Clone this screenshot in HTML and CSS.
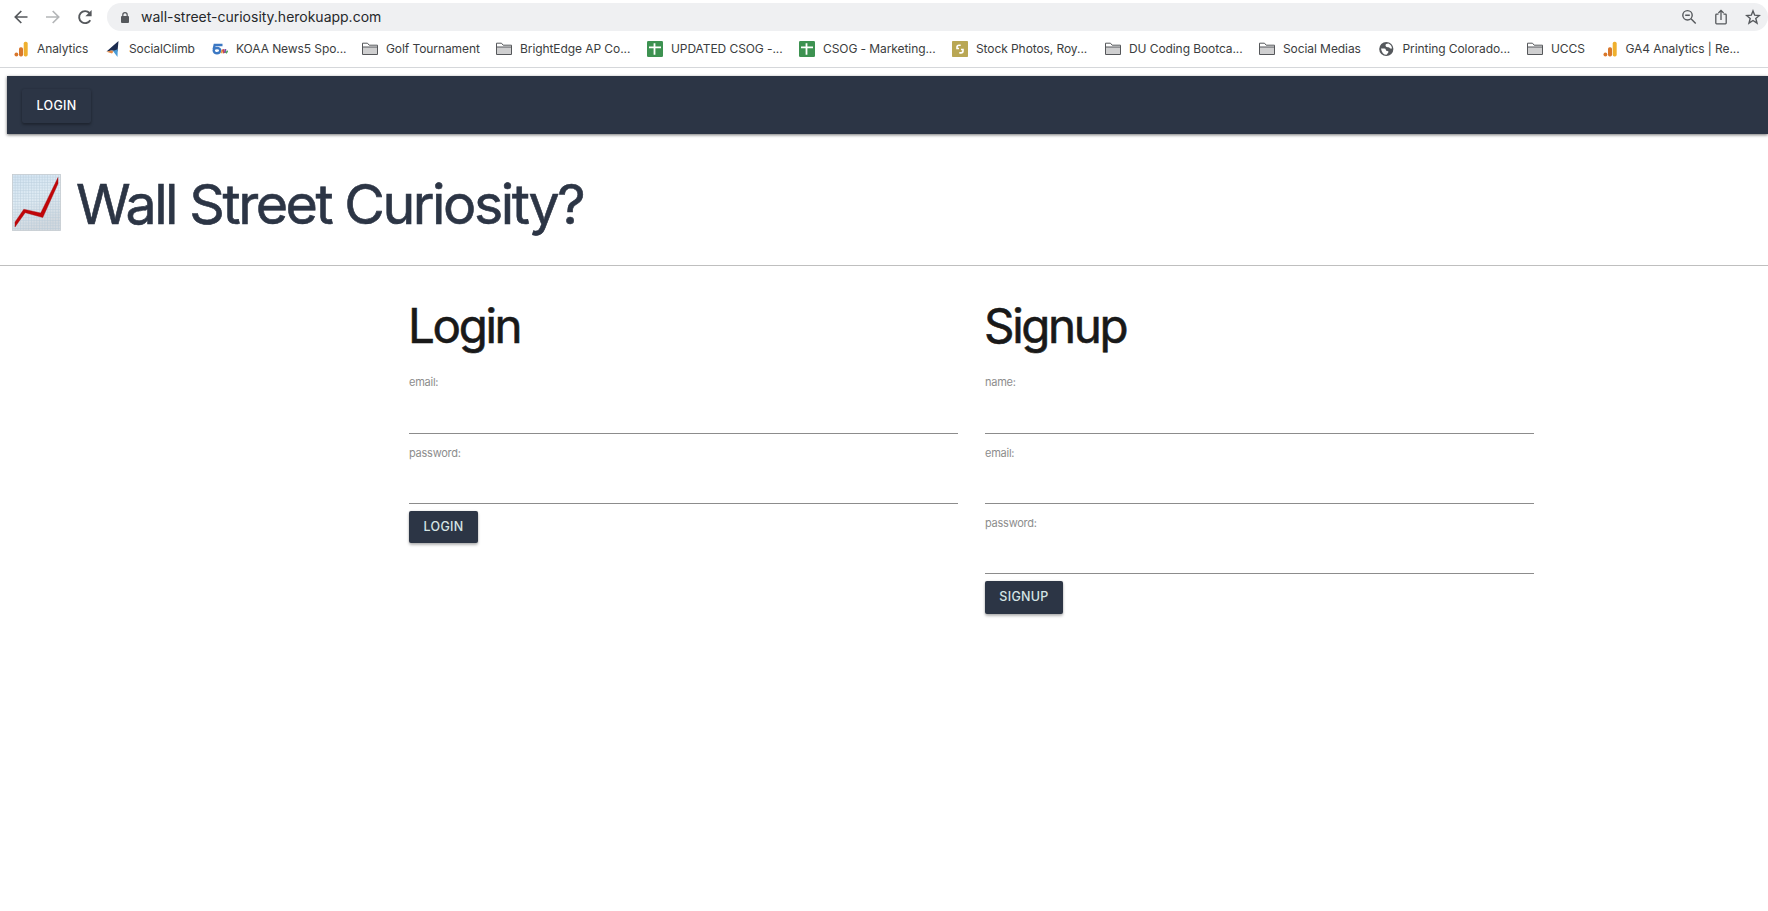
FILE: index.html
```html
<!DOCTYPE html>
<html lang="en">
<head>
<meta charset="utf-8">
<title>Wall Street Curiosity?</title>
<link rel="stylesheet" href="styles.css">
</head>
<body>
<svg class="defs" width="0" height="0">
  <symbol id="folder" viewBox="0 0 16 16"><path d="M.5 13.5v-11h5l1.700 2h8.300v9z" fill="#fff"/><path d="M1 6h14v7.500H1z" fill="#cfcfd0"/><path d="M.5 13.500v-11.300h5l1.700 2h8.300v9.300zM.5 6h15" fill="none" stroke="#55575a"/></symbol>
  <symbol id="bars" viewBox="0 0 16 16"><circle cx="3.400" cy="13.500" r="1.900" fill="#d9772b"/><rect x="6" y="6.200" width="4" height="9.200" rx="1.700" fill="#d9772b"/><rect x="10.700" y=".8" width="4" height="14.600" rx="1.700" fill="#efb02e"/></symbol>
  <symbol id="sheet" viewBox="0 0 16 16"><rect width="16" height="16" rx="1.300" fill="#3d9251"/><path d="M2 6.300h12M7.500 2.300v11.500" stroke="#fff" stroke-width="1.800"/></symbol>
</svg>
<header class="browser">
  <div class="toolbar">
    <svg class="tool" viewBox="0 0 16 16"><path d="M14.500 8H2.500M8.300 2 2.300 8l6 6" fill="none" stroke="#55585c" stroke-width="1.700"/></svg>
    <svg class="tool" viewBox="0 0 16 16"><path d="M1 8h12.500M7.700 2l6 6-6 6" fill="none" stroke="#b4b6b8" stroke-width="1.700"/></svg>
    <svg class="tool" viewBox="0 0 16 16"><path d="M13.300 11.200A6 6 0 1 1 12.500 4" fill="none" stroke="#55585c" stroke-width="1.900"/><path d="M14.600 1v6.200H8.400z" fill="#55585c"/></svg>
    <div class="address">
      <svg class="lock" viewBox="0 0 8 11"><rect y="4" width="8" height="7" rx="1" fill="#55585c"/><path d="M1.800 4.500V2.900a2.200 2.200 0 0 1 4.400 0v1.600" fill="none" stroke="#55585c" stroke-width="1.200"/></svg>
      <span class="url">wall-street-curiosity.herokuapp.com</span>
      <div class="actions">
        <svg class="action" viewBox="0 0 16 16"><g fill="none" stroke="#55585c" stroke-width="1.400"><circle cx="6.500" cy="6.300" r="4.700"/><path d="M4.200 6.300h4.600M10 9.800l4.700 4.700"/></g></svg>
        <svg class="action" viewBox="0 0 16 16"><g fill="none" stroke="#55585c" stroke-width="1.300"><path d="M5.500 5.200H3.600q-.8 0-.8.8v8q0 .8.8.8h8.800q.8 0 .8-.8V6q0-.8-.8-.8h-1.900M8 11V2M5.400 4 8 1.400 10.600 4"/></g></svg>
        <svg class="action" viewBox="0 0 16 16"><path d="m8 1.900 1.700 4.300 4.700.3-3.600 3 1.200 4.600-4-2.600-4 2.600 1.200-4.600-3.600-3 4.700-.3z" fill="none" stroke="#55585c" stroke-width="1.400"/></svg>
      </div>
    </div>
  </div>
  <nav class="bookmarks">
    <a class="bm"><svg class="fav"><use href="#bars"/></svg><span>Analytics</span></a>
    <a class="bm"><svg class="fav" viewBox="0 0 16 16"><path d="M13.500 0 1.500 10.500 7 9.500l5.500 1z" fill="#1c2c50"/><path d="m1.500 10.800 4.500-1.200 2.500.800-1.500 2z" fill="#e58a45"/><path d="m8 10 4.700-1.700L12.500 16z" fill="#4a9bd6"/></svg><span>SocialClimb</span></a>
    <a class="bm"><svg class="fav" viewBox="0 0 16 16"><path d="M10.500 4H2.700L1.700 8.300" fill="none" stroke="#3c78c3" stroke-width="2.400"/><ellipse cx="5" cy="9.600" rx="3.300" ry="2.600" fill="none" stroke="#3c78c3" stroke-width="2.400"/><path d="M9.500 12.300 10.300 9" stroke="#e7a03b" stroke-width="1.600"/><path d="m12 12.300-1-4" stroke="#d4474d" stroke-width="1.900"/><path d="m12.900 12 .5-4" stroke="#7755a3" stroke-width="1.800"/><path d="m13.900 12.300 1.800-2.500" stroke="#4da35d" stroke-width="1.600"/></svg><span>KOAA News5 Spo...</span></a>
    <a class="bm"><svg class="fav"><use href="#folder"/></svg><span>Golf Tournament</span></a>
    <a class="bm"><svg class="fav"><use href="#folder"/></svg><span>BrightEdge AP Co...</span></a>
    <a class="bm"><svg class="fav"><use href="#sheet"/></svg><span>UPDATED CSOG -...</span></a>
    <a class="bm"><svg class="fav"><use href="#sheet"/></svg><span>CSOG - Marketing...</span></a>
    <a class="bm"><svg class="fav" viewBox="0 0 16 16"><rect width="16" height="16" rx=".8" fill="#b9a754"/><path d="M5 8.300V6.300Q5 4.300 7 4.300h1.700M11 7.700V10q0 1.900-2 1.900H7.300M5 7.500h2M9 8.500H11" fill="none" stroke="#fff" stroke-width="1.600"/></svg><span>Stock Photos, Roy...</span></a>
    <a class="bm"><svg class="fav"><use href="#folder"/></svg><span>DU Coding Bootca...</span></a>
    <a class="bm"><svg class="fav"><use href="#folder"/></svg><span>Social Medias</span></a>
    <a class="bm"><svg class="fav" viewBox="0 0 16 16"><circle cx="7.300" cy="8" r="7.100" fill="#55585c"/><path d="M2 7.500h3.300q1.500 0 1.500 1.200t1.700 1.200q1.500 0 .8 1.500L7.500 13.800q-4.500 0-5.500-6.300M6.500 4.500q0-1.800 3-1.900 3.300 1.500 3.500 5h-1.800Q10 6 9 6.200 6.500 6.300 6.500 4.500" fill="#fff"/></svg><span>Printing Colorado...</span></a>
    <a class="bm"><svg class="fav"><use href="#folder"/></svg><span>UCCS</span></a>
    <a class="bm"><svg class="fav"><use href="#bars"/></svg><span>GA4 Analytics | Re...</span></a>
  </nav>
</header>
<nav class="appbar"><a class="btn btn-nav">LOGIN</a></nav>
<header class="hero">
  <svg class="chart" viewBox="0 0 49 57">
    <defs>
      <linearGradient id="paper" x1="0" y1="0" x2=".3" y2="1"><stop offset="0" stop-color="#d3e4f2"/><stop offset=".5" stop-color="#e0ecf4"/><stop offset="1" stop-color="#d3d9df"/></linearGradient>
      <pattern id="grid" width="2.700" height="2.700" patternUnits="userSpaceOnUse"><path d="M0 .4h2.700M.4 0v2.700" stroke="#afc5d5" stroke-width=".6" opacity=".65"/></pattern>
    </defs>
    <rect x=".5" y=".5" width="48" height="56" fill="url(#paper)"/><rect x=".5" y=".5" width="48" height="56" fill="url(#grid)" stroke="#c5cbd0" stroke-width=".8"/>
    <path d="M3 53v-5l8.800-12.800L28.700 39 46 3.500v6.300L30.800 43.500 13.200 38.700z" fill="#c10508" stroke="#a30d10" stroke-width=".4"/>
  </svg>
  <h1 class="title">Wall Street Curiosity?</h1>
</header>
<main class="forms">
  <form class="panel">
    <h2 class="heading">Login</h2>
    <label class="field"><span class="label">email:</span><input type="text"></label>
    <label class="field"><span class="label">password:</span><input type="password"></label>
    <button class="btn btn-login" type="button">LOGIN</button>
  </form>
  <form class="panel">
    <h2 class="heading">Signup</h2>
    <label class="field"><span class="label">name:</span><input type="text"></label>
    <label class="field"><span class="label">email:</span><input type="text"></label>
    <label class="field"><span class="label">password:</span><input type="password"></label>
    <button class="btn btn-signup" type="button">SIGNUP</button>
  </form>
</main>
</body>
</html>
```
FILE: styles.css
```css
* { box-sizing: border-box; }
body { margin: 0; background: #fff; font-family: Inter, "Liberation Sans", sans-serif; overflow: hidden; height: 911px; }
.defs { display: block; }
.browser { height: 68px; border-bottom: 1px solid #d5d7da; }
.toolbar { display: flex; align-items: center; gap: 16px; height: 34px; padding-left: 13px; }
.tool { width: 16px; height: 16px; flex: none; }
.address { flex: 1; display: flex; align-items: center; height: 28px; margin-left: -2px; padding: 0 7px 0 14px; border-radius: 14px; background: #eff0f2; }
.lock { width: 8px; height: 11px; }
.url { margin-left: 12px; font-size: 14px; line-height: 28px; letter-spacing: -.01px; color: #26282b; white-space: nowrap; }
.actions { display: flex; gap: 16px; margin-left: auto; }
.action { width: 16px; height: 16px; }
.bookmarks { display: grid; grid-template-columns: 92px 107px 150px 134px 151px 152px 153px 153px 154px 119.500px 148.500px 74.500px 160px; height: 33px; padding: 7px 0 0 13px; }
.bm { display: flex; gap: 8px; height: 16px; align-items: flex-start; font-size: 12px; line-height: 15px; letter-spacing: -.08px; color: #3b3d40; white-space: nowrap; }
.fav { width: 16px; height: 16px; flex: none; }
.appbar { display: flex; align-items: center; height: 58px; margin: 8px 0 0 7px; padding: 2px 0 0 15px; background: #2c3545; box-shadow: 0 1px 3px rgba(0,0,0,.55); }
.btn { display: flex; align-items: center; justify-content: center; padding: 0; border: 0; border-radius: 2px; background: #2c3545; font-family: inherit; font-size: 12.500px; font-weight: 500; line-height: 16px; letter-spacing: .3px; box-shadow: 0 2px 3px rgba(0,0,0,.28), 0 0 2px rgba(0,0,0,.15); }
.btn-nav { width: 69px; height: 34px; color: #fff; }
.hero { display: flex; align-items: flex-start; gap: 15px; height: 132px; padding: 40px 0 0 12px; border-bottom: 1px solid #bfbfbf; }
.chart { width: 49px; height: 57px; flex: none; }
.title { margin: -3px 0 0; font-size: 55.500px; font-weight: 400; line-height: 66px; letter-spacing: -2.450px; color: #2c3545; -webkit-text-stroke: .6px #2c3545; white-space: nowrap; }
.forms { display: grid; grid-template-columns: 549px 549px; column-gap: 27px; padding: 27px 0 0 409px; }
.heading { margin: 0 0 0 -1px; height: 80px; font-size: 47.500px; font-weight: 400; line-height: 65px; letter-spacing: -2.350px; color: #191919; -webkit-text-stroke: .6px #191919; white-space: nowrap; }
.field { display: flex; flex-direction: column; justify-content: space-between; height: 70px; }
.label { height: 16px; margin-top: 11px; font-size: 11px; line-height: 16px; letter-spacing: -.25px; color: #8d8d8d; }
.field:first-of-type { height: 61px; }
.field:first-of-type .label { margin-top: 1px; }
.field input { width: 100%; height: 40px; border: 0; border-bottom: 1px solid #8c8c8c; padding: 0; outline: 0; background: transparent; }
.btn-login { width: 69px; height: 32px; margin-top: 7px; color: #d5e5e5; }
.btn-signup { width: 78px; height: 33px; margin-top: 7px; padding-bottom: 2px; color: #d5e5e5; }
```
